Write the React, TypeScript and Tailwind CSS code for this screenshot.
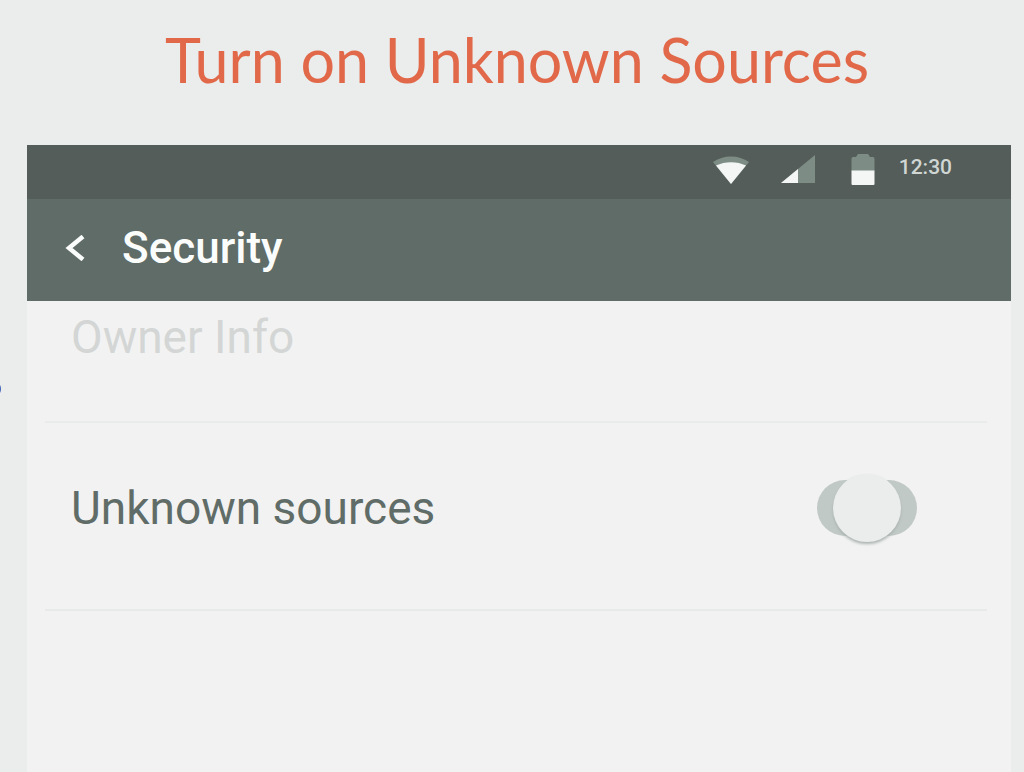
import React, { useState } from "react";

function StatusBar() {
  return (
    <div className="flex h-[54px] items-start justify-end bg-[#545d59] pr-[59px] pt-2">
      {/* wifi */}
      <svg className="mr-8 mt-[3px] h-7 w-9" viewBox="0 0 36 28" aria-hidden="true">
        <path d="M0 6C10-1.500 26-1.500 36 6L18 28Z" fill="#7d8d86" />
        <path d="M3 9.500C12 5 24 5 33 9.500L18 28Z" fill="#f4f6f5" />
      </svg>
      {/* signal */}
      <svg className="mr-9 mt-[2px] h-7 w-[34px]" viewBox="0 0 34 28" aria-hidden="true">
        <path d="M34 0V28H0Z" fill="#7d8d86" />
        <path d="M17 14V28H0Z" fill="#f4f6f5" />
      </svg>
      {/* battery */}
      <svg className="mr-6 mt-[1px] h-8 w-6" viewBox="0 0 24 32" aria-hidden="true">
        <path d="M7 0H17L19 3H22Q23.500 3 23.500 5V17H.5V5Q.5 3 2 3H5Z" fill="#7d8d86" />
        <path d="M.5 16.500H23.500V30Q23.500 31 22.500 31H1.500Q.5 31 .5 30Z" fill="#f4f6f5" />
      </svg>
      <time className="pt-[2px] text-[21px] font-medium leading-6 text-[#d0d6d3]">12:30</time>
    </div>
  );
}

function Header() {
  return (
    <header className="flex h-[102px] items-center bg-[#606c67] pb-1 pl-[38px] text-[#fbfdfc]">
      <button type="button" aria-label="Back" className="mr-[37px]">
        <svg className="h-[26px] w-5" viewBox="0 0 20 26" fill="none" aria-hidden="true">
          <path d="M18 1.500L4 13L18 24.500" stroke="currentColor" strokeWidth="4.500" />
        </svg>
      </button>
      <h2 className="text-[44px] font-medium leading-[56px]">Security</h2>
    </header>
  );
}

function Toggle({ id }: { id: string }) {
  const [on, setOn] = useState(false);

  return (
    <span className="relative flex h-[56px] w-[100px] items-center justify-center">
      <input
        id={id}
        type="checkbox"
        checked={on}
        onChange={(e) => setOn(e.target.checked)}
        className="peer absolute inset-0 cursor-pointer appearance-none rounded-full bg-[#c1c9c6] checked:bg-[#8fa39b]"
      />
      <span className="pointer-events-none relative size-[68px] shrink-0 rounded-full bg-[#eaedec] shadow-[0_2px_3px_#a9b2ae] peer-checked:translate-x-4" />
    </span>
  );
}

export default function App() {
  return (
    <div className="relative flex min-h-screen flex-col overflow-hidden bg-[#eaedec] pl-[27px] pr-[13px] font-['Roboto',sans-serif]">
      <span className="absolute -left-[15px] top-[381px] size-4 rounded-full bg-[#3f63b5]" />

      <h1 className="h-[145px] pr-1 pt-5 text-center font-['Lato',sans-serif] text-[61px] leading-[80px] text-[#e1694a]">
        Turn on Unknown Sources
      </h1>

      <main className="flex grow flex-col bg-[#f2f2f2]">
        <StatusBar />
        <Header />

        <div className="ml-[18px] mr-6 h-[122px] border-b-2 border-[#e9eceb] pl-[26px] pt-2">
          <p className="text-[46px] leading-[56px] text-[#d3d6d5]">Owner Info</p>
        </div>

        <div className="ml-[18px] mr-6 flex h-[188px] items-center justify-between border-b-2 border-[#e8eae9] pb-4 pl-[26px] pr-[70px]">
          <label htmlFor="unknown-sources" className="text-[46px] leading-[56px] text-[#606c67]">
            Unknown sources
          </label>
          <Toggle id="unknown-sources" />
        </div>
      </main>
    </div>
  );
}
